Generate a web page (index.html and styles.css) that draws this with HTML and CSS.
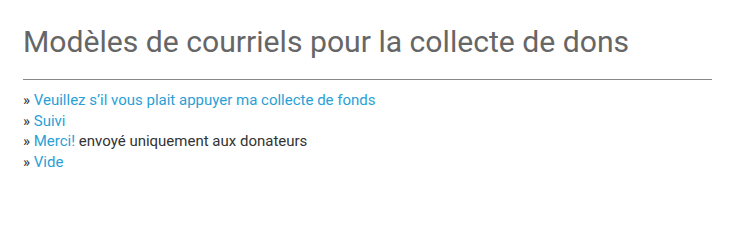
FILE: index.html
```html
<!DOCTYPE html>
<html lang="fr">
<head>
<meta charset="utf-8">
<link rel="stylesheet" href="styles.css">
</head>
<body>
<div class="page">
  <h1 class="title">Modèles de courriels pour la collecte de dons</h1>
  <hr class="rule">
  <ul class="list">
    <li>» <a href="#">Veuillez s’il vous plait appuyer ma collecte de fonds</a></li>
    <li>» <a href="#">Suivi</a></li>
    <li>» <a href="#">Merci!</a> envoyé uniquement aux donateurs</li>
    <li>» <a href="#">Vide</a></li>
  </ul>
</div>
</body>
</html>
```
FILE: styles.css
```css
html, body {
  margin: 0;
  padding: 0;
  background: #fff;
}
.page {
  width: 689px;
  padding: 25px 0 0 23px;
  font-family: Roboto, "Liberation Sans", sans-serif;
  color: #333;
}
.title {
  margin: 0;
  font-size: 30.15px;
  font-weight: 400;
  line-height: 33px;
  color: #666;
}
.rule {
  margin: 21px 0 0 0;
  border: 0;
  border-top: 1px solid #888;
  height: 0;
}
.list {
  list-style: none;
  margin: 10px 0 0 0;
  padding: 0;
  font-size: 15px;
  line-height: 20.5px;
}
.list a {
  color: #2a9fd6;
  text-decoration: none;
}
```
